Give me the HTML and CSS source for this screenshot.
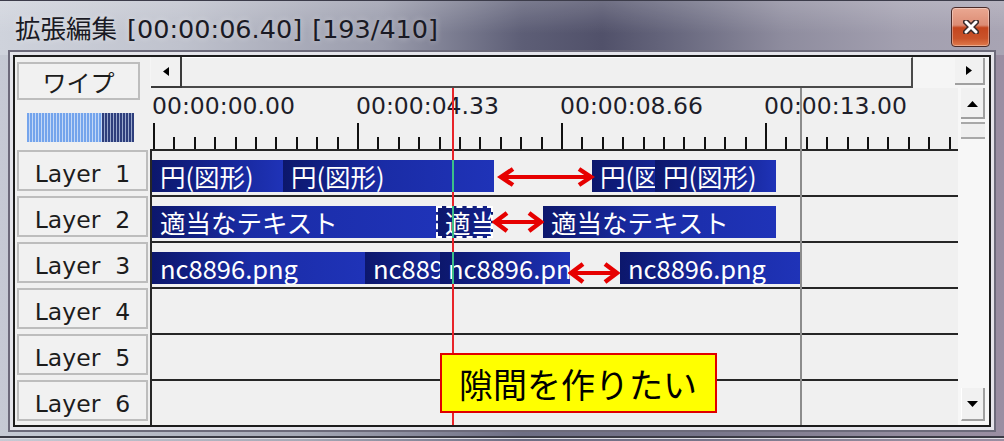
FILE: index.html
```html
<!DOCTYPE html>
<html>
<head>
	<meta charset="utf-8">
	<title>拡張編集</title>
	<link rel="stylesheet" href="styles.css">
</head>
<body>
	<div class="window">
		<div class="titlebar">
			<span class="title">拡張編集 [00:00:06.40] [193/410]</span>
			<div class="close">
				<svg width="16" height="14" viewBox="0 0 16 14">
					<path d="M3 2 L13 12 M13 2 L3 12" stroke="#3a2a2a" stroke-width="6" stroke-linecap="round"/>
					<path d="M3 2 L13 12 M13 2 L3 12" stroke="#fff" stroke-width="3" stroke-linecap="round"/>
				</svg>
			</div>
		</div>

		<div class="client">
			<div class="side-head">
				<div class="btn wipe">ワイプ</div>
				<div class="meter"></div>
			</div>

			<div class="hscroll">
				<div class="sbtn sbtn-left">
					<svg width="6" height="9" viewBox="0 0 6 9"><path d="M6 0 L0 4.5 L6 9 Z" fill="#000"/></svg>
				</div>
				<div class="thumb"></div>
				<div class="track"></div>
				<div class="sbtn sbtn-right">
					<svg width="6" height="9" viewBox="0 0 6 9"><path d="M0 0 L6 4.5 L0 9 Z" fill="#000"/></svg>
				</div>
			</div>

			<div class="timeline">
				<div class="ruler">
					<span class="time" style="left:2px">00:00:00.00</span>
					<span class="time" style="left:206px">00:00:04.33</span>
					<span class="time" style="left:410px">00:00:08.66</span>
					<span class="time" style="left:614px">00:00:13.00</span>
					<div class="ticks"></div>
				</div>

				<div class="layers">
					<div class="row">
						<div class="clip" style="left:0;width:131px">円(図形)</div>
						<div class="clip" style="left:131px;width:211px">円(図形)</div>
						<div class="clip" style="left:440px;width:63px">円(図形)</div>
						<div class="clip" style="left:503px;width:121px">円(図形)</div>
						<svg class="gap-arrow" style="left:345px;top:16px" width="98" height="20" viewBox="0 0 98 20">
							<path d="M5 10 H93" stroke="#e60000" stroke-width="4"/>
							<path d="M16 2 L4 10 L16 18 M82 2 L94 10 L82 18" fill="none" stroke="#e60000" stroke-width="4.5" stroke-linejoin="miter"/>
						</svg>
					</div>
					<div class="row">
						<div class="clip" style="left:0;width:284px">適当なテキスト</div>
						<div class="clip clip-selected" style="left:284px;width:57px">適当なテキスト</div>
						<div class="clip" style="left:391px;width:233px">適当なテキスト</div>
						<svg class="gap-arrow" style="left:340px;top:14px" width="52" height="22" viewBox="0 0 52 22">
							<path d="M5 11 H47" stroke="#e60000" stroke-width="4"/>
							<path d="M15 2 L3 11 L15 20 M37 2 L49 11 L37 20" fill="none" stroke="#e60000" stroke-width="4.5" stroke-linejoin="miter"/>
						</svg>
					</div>
					<div class="row">
						<div class="clip" style="left:0;width:213px">nc8896.png</div>
						<div class="clip" style="left:213px;width:75px">nc8896.png</div>
						<div class="clip" style="left:288px;width:130px">nc8896.png</div>
						<div class="clip" style="left:468px;width:180px">nc8896.png</div>
						<svg class="gap-arrow" style="left:416px;top:19px" width="52" height="22" viewBox="0 0 52 22">
							<path d="M5 11 H47" stroke="#e60000" stroke-width="4"/>
							<path d="M15 2 L3 11 L15 20 M37 2 L49 11 L37 20" fill="none" stroke="#e60000" stroke-width="4.5" stroke-linejoin="miter"/>
						</svg>
					</div>
					<div class="row"></div>
					<div class="row"></div>
					<div class="row"></div>
				</div>

				<div class="endline"></div>
				<div class="playhead"></div>
				<div class="callout">隙間を作りたい</div>
			</div>

			<div class="side-layers">
				<div class="btn layer">Layer&nbsp;&nbsp;1</div>
				<div class="btn layer">Layer&nbsp;&nbsp;2</div>
				<div class="btn layer">Layer&nbsp;&nbsp;3</div>
				<div class="btn layer">Layer&nbsp;&nbsp;4</div>
				<div class="btn layer">Layer&nbsp;&nbsp;5</div>
				<div class="btn layer">Layer&nbsp;&nbsp;6</div>
			</div>

			<div class="vscroll">
				<div class="sbtn sbtn-up">
					<svg width="11" height="6" viewBox="0 0 11 6"><path d="M0 6 L5.5 0 L11 6 Z" fill="#000"/></svg>
				</div>
				<div class="vthumb"></div>
				<div class="sbtn sbtn-down">
					<svg width="11" height="6" viewBox="0 0 11 6"><path d="M0 0 L5.5 6 L11 0 Z" fill="#000"/></svg>
				</div>
			</div>
		</div>

		<div class="frame-foot"></div>
	</div>
</body>
</html>
```

FILE: styles.css
```css
body {
	margin: 0;
	width: 1004px;
	height: 441px;
	overflow: hidden;
	background: linear-gradient(90deg, #c6cad4 0%, #a6a9b6 30%, #6e6e84 52%, #77758a 70%, #948c9e 90%, #9a8ea2 100%);
}

.window {
	display: flex;
	flex-direction: column;
	height: 441px;
}

/* title bar */
.titlebar {
	height: 55px;
	box-sizing: border-box;
	border-top: 1px solid #3c3c4a;
	display: flex;
	align-items: center;
	padding: 0 14px 0 15px;
	background:
		linear-gradient(to bottom, rgba(255,255,255,0.18), rgba(255,255,255,0) 60%),
		linear-gradient(90deg, #cfd3dc 0%, #bfc2cd 18%, #9a9cac 38%, #5d5e76 52%, #51516a 60%, #6a6a80 68%, #8e8c9e 78%, #a3a0b0 90%, #a8a4b3 100%);
}
.title {
	font-family: "DejaVu Sans", "Noto Sans CJK JP", sans-serif;
	font-size: 25.5px;
	word-spacing: 2px;
	color: #1a1a24;
	text-shadow: 0 0 6px rgba(255,255,255,0.45);
	padding-bottom: 4px;
}
.close {
	margin-left: auto;
	margin-top: -2px;
	width: 39px;
	height: 40px;
	box-sizing: border-box;
	border: 1px solid #4a2a28;
	border-radius: 4px;
	display: flex;
	align-items: center;
	justify-content: center;
	background: linear-gradient(to bottom, #eaa892 0%, #dc8c74 45%, #c4461f 52%, #c9532a 80%, #e07a4c 100%);
	box-shadow: inset 0 0 0 1px rgba(255,255,255,0.35);
}

/* client area */
.client {
	margin: 0 13px;
	border: 2px solid #1c1c1c;
	box-shadow: 0 0 0 3px #e4e4ea, 0 0 0 5px #6c6a7a;
	background: #f0f0f0;
	display: grid;
	grid-template-columns: 135px 808px 31px;
	grid-template-rows: 31px 61px 276px;
	font-family: "DejaVu Sans", sans-serif;
}

.btn {
	box-sizing: border-box;
	border: 2px solid #bdbdbd;
	background: #f1f1f1;
	display: flex;
	align-items: center;
	justify-content: center;
	color: #1c1c1c;
}

.side-head {
	grid-column: 1;
	grid-row: 1 / 3;
	padding: 5px 0 0 2px;
}
.wipe {
	width: 123px;
	height: 38px;
	font-family: "Noto Sans CJK JP", sans-serif;
	font-size: 24px;
}
.meter {
	margin: 13px 0 0 10px;
	width: 107px;
	height: 29px;
	background:
		repeating-linear-gradient(90deg, #2e3e7c 0 2px, #9aa8cc 2px 3px) right / 32px 100% no-repeat,
		repeating-linear-gradient(90deg, #74a4ec 0 2px, #c4d8f6 2px 3px);
}

.side-layers {
	grid-column: 1;
	grid-row: 3;
	padding: 1px 0 0 2px;
	display: flex;
	flex-direction: column;
	gap: 5px;
}
.layer {
	width: 131px;
	height: 41px;
	padding-top: 6px;
	font-size: 23.5px;
}

/* scrollbars */
.hscroll {
	grid-column: 2 / 4;
	grid-row: 1;
	display: flex;
	background: #f5f5f5;
}
.sbtn {
	box-sizing: border-box;
	background: #f1f1f1;
	display: flex;
	align-items: center;
	justify-content: center;
}
.sbtn-left {
	margin-left: 1px;
	width: 31px;
	border-right: 2px solid #3a3a3a;
	border-bottom: 2px solid #3a3a3a;
}
.thumb {
	width: 731px;
	box-sizing: border-box;
	border-top: 1px solid #fff;
	border-right: 2px solid #4a4a4a;
	border-bottom: 2px solid #4a4a4a;
	background: #f0f0f0;
}
.track {
	flex: 1;
}
.sbtn-right {
	width: 30px;
	height: 27px;
	margin: 1px 4px 0 0;
	border-right: 2px solid #a0a0a0;
	border-bottom: 2px solid #a0a0a0;
}

.vscroll {
	grid-column: 3;
	grid-row: 2 / 4;
	display: flex;
	flex-direction: column;
	padding: 0 4px 4px 3px;
	background: #f7f7f7;
}
.sbtn-up {
	height: 31px;
	padding-top: 2px;
	border-right: 2px solid #a0a0a0;
	border-bottom: 2px solid #a0a0a0;
}
.vthumb {
	margin-top: 3px;
	height: 17px;
	box-sizing: border-box;
	background: #efefef;
	border-top: 2px solid #a8a8a8;
	border-bottom: 2px solid #a8a8a8;
}
.sbtn-down {
	margin-top: auto;
	height: 33px;
	border-right: 2px solid #a0a0a0;
	border-bottom: 2px solid #a0a0a0;
	border-left: 1px solid #fff;
}

/* timeline */
.timeline {
	grid-column: 2;
	grid-row: 2 / 4;
	position: relative;
}
.ruler {
	height: 61px;
	position: relative;
}
.time {
	position: absolute;
	top: 6px;
	font-size: 23.5px;
	line-height: 24px;
	color: #1e1e2a;
	white-space: nowrap;
}
.ticks {
	position: absolute;
	left: 3px;
	bottom: 0;
	width: 798px;
	height: 26px;
	background:
		repeating-linear-gradient(90deg, #111 0 2px, transparent 2px 204px),
		repeating-linear-gradient(90deg, #111 0 2px, transparent 2px 20.4px) left bottom / 100% 12px no-repeat;
}

.row {
	height: 46px;
	box-sizing: border-box;
	border-top: 2px solid #262626;
	border-left: 2px solid #262626;
	position: relative;
}
.clip {
	position: absolute;
	top: 9px;
	height: 32px;
	box-sizing: border-box;
	padding-left: 8px;
	overflow-x: clip;
	white-space: nowrap;
	font-family: "Noto Sans CJK JP", sans-serif;
	font-size: 25.5px;
	line-height: 31px;
	color: #fff;
	background: linear-gradient(90deg, #0c176c 0, #1a2ca6 100px, #1f33b8 100%);
}
.clip-selected {
	border: 2px dashed #fff;
	padding-left: 7px;
	line-height: 27px;
}
.gap-arrow {
	position: absolute;
}

.endline {
	position: absolute;
	left: 650px;
	top: 0;
	width: 2px;
	height: 337px;
	background: #8c8c8c;
}
.playhead {
	position: absolute;
	left: 302px;
	top: 0;
	width: 2px;
	height: 337px;
	background: linear-gradient(to bottom,
		#e8242a 0 72px, #3cc088 72px 104px,
		#e8242a 104px 118px, #3cc088 118px 150px,
		#e8242a 150px 164px, #3cc088 164px 196px,
		#e8242a 196px);
}
.callout {
	position: absolute;
	left: 290px;
	top: 265px;
	width: 277px;
	height: 60px;
	box-sizing: border-box;
	border: 2px solid #e00000;
	background: #ffff00;
	display: flex;
	align-items: center;
	padding-left: 17px;
	font-family: "Noto Sans CJK JP", sans-serif;
	font-size: 34px;
	color: #000;
}

.frame-foot {
	height: 14px;
	background: linear-gradient(to bottom, transparent 9px, #3a3a44 9px 11px, #dcdce2 11px 12px, transparent 12px);
}
```
